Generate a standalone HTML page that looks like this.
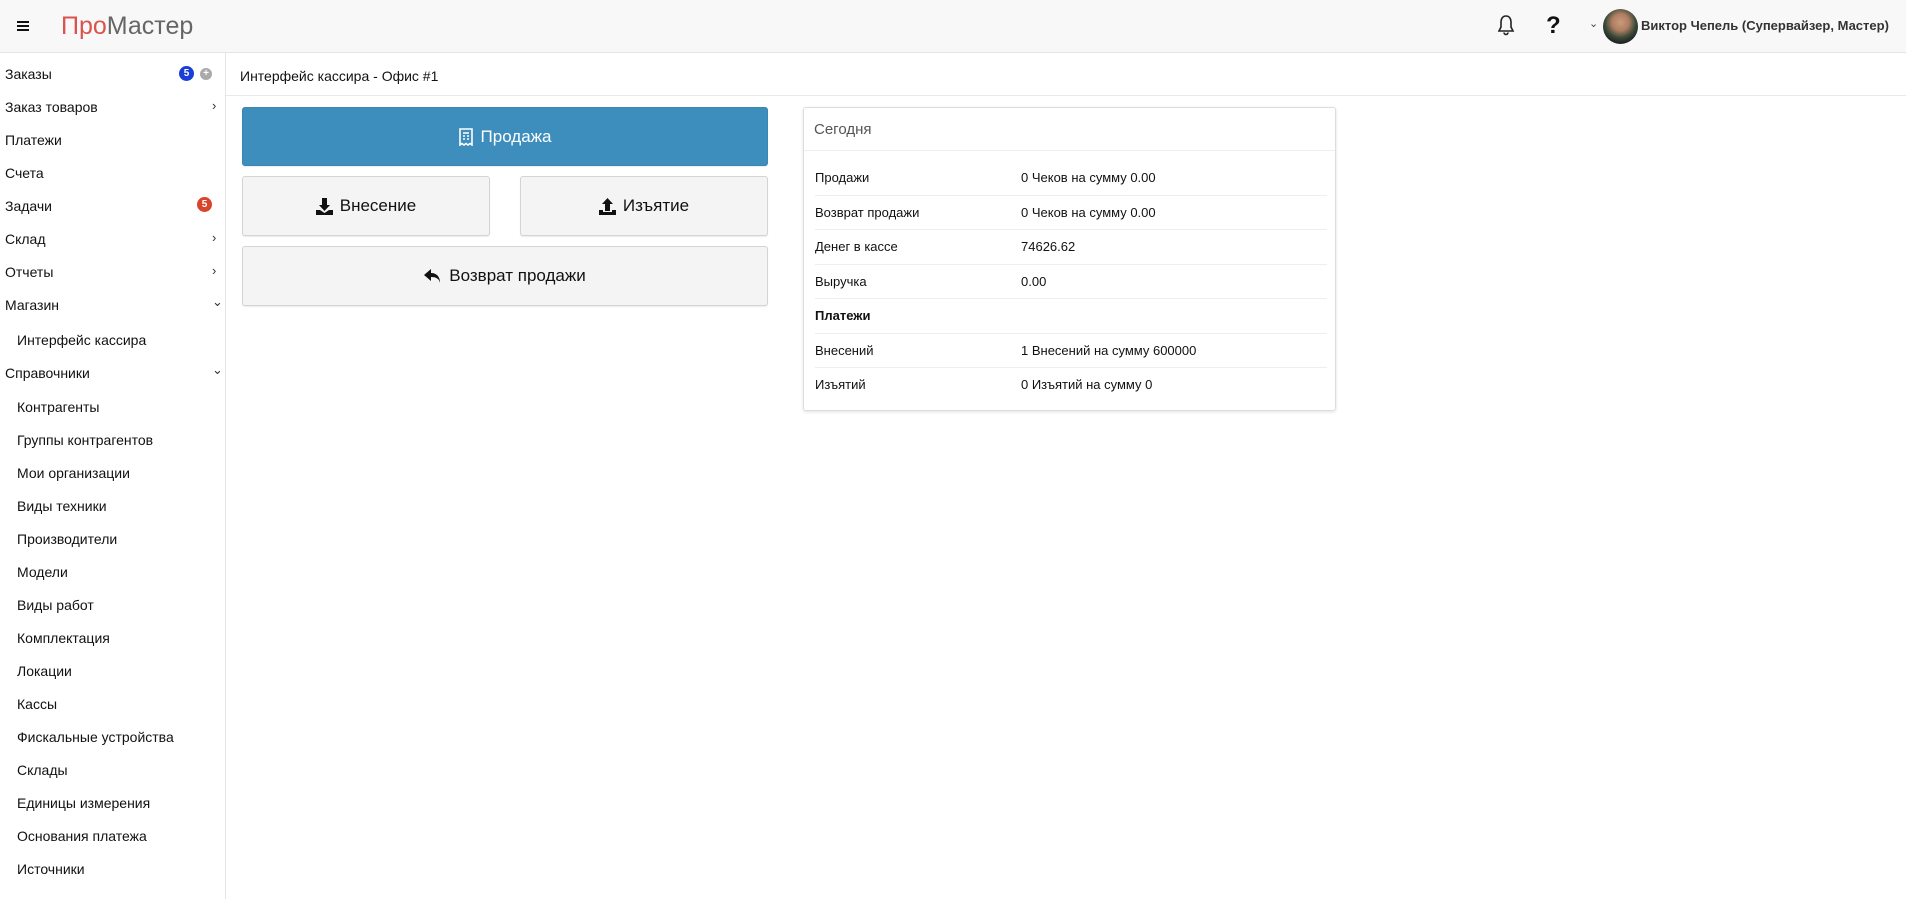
<!DOCTYPE html>
<html><head><meta charset="utf-8"><style>
*{box-sizing:border-box;margin:0;padding:0}
body{width:1906px;height:899px;overflow:hidden;font-family:"Liberation Sans",sans-serif;background:#fff;color:#111;position:relative}
.top{position:absolute;left:0;top:0;width:1906px;height:53px;background:#f8f8f8;border-bottom:1px solid #e5e5e5}
.abs{position:absolute}
.side{position:absolute;left:0;top:53px;width:226px;height:846px;border-right:1px solid #e5e5e5}
.it{position:absolute;left:5px;font-size:14px;line-height:18px;margin-top:1px}
.sub{left:17px}
.chev{position:absolute;left:212px;font-size:13px;color:#333;margin-top:1px}
.btn{position:absolute;border:1px solid #d4d4d4;background:#f4f4f4;border-radius:3px;display:flex;align-items:center;justify-content:center;font-size:17px;color:#111;box-shadow:0 1px 1px rgba(0,0,0,.08)}
.card{position:absolute;left:803px;top:107px;width:533px;height:304px;border:1px solid #ddd;border-radius:3px;box-shadow:0 1px 3px rgba(0,0,0,.12)}
.row{position:absolute;left:11px;width:512px;font-size:13px;height:34px;line-height:34px;border-top:1px solid #eee}
.row span{position:absolute;left:206px}
.badge{position:absolute;width:15px;height:15px;border-radius:50%;color:#fff;font-size:10px;font-weight:bold;text-align:center;line-height:15px;margin-top:1px}
</style></head><body>
<div class="top">
<svg class="abs" style="left:17px;top:21px" width="12" height="10" viewBox="0 0 12 10"><path d="M0 1h12M0 5h12M0 9h12" stroke="#111" stroke-width="2"/></svg>
<div class="abs" style="left:61px;top:12px;font-size:25px;color:#666"><span style="color:#d9534f">Про</span>Мастер</div>
<svg class="abs" style="left:1497px;top:14px" width="18" height="22" viewBox="0 0 18 22"><path d="M9 2C5.5 2 4 5 4 8v5l-2 4h14l-2-4V8c0-3-1.5-6-5-6zM7 18.5a2 2 0 0 0 4 0" fill="none" stroke="#222" stroke-width="1.6"/></svg>
<div class="abs" style="left:1546px;top:12px;font-size:24px;font-weight:bold">?</div>
<div class="abs" style="left:1589px;top:17px;font-size:11px;color:#444">&#8964;</div>
<div class="abs" style="left:1603px;top:9px;width:35px;height:35px;border-radius:50%;background:radial-gradient(circle at 50% 38%,#c99a7c 0,#b07e62 30%,#3a4a3a 55%,#1a1a1a 80%)"></div>
<div class="abs" style="left:1641px;top:18px;font-size:13px;font-weight:bold;color:#333">Виктор Чепель (Супервайзер, Мастер)</div>
</div>
<div class="side">
<div class="it" style="top:11px">Заказы</div>
<div class="badge" style="left:179px;top:12px;background:#1a3fd6">5</div>
<div class="badge" style="left:200px;top:14px;width:12px;height:12px;line-height:12px;background:#aaa">+</div>
<div class="it" style="top:44px">Заказ товаров</div><div class="chev" style="top:44px">&#8250;</div>
<div class="it" style="top:77px">Платежи</div>
<div class="it" style="top:110px">Счета</div>
<div class="it" style="top:143px">Задачи</div>
<div class="badge" style="left:197px;top:143px;background:#d9452b">5</div>
<div class="it" style="top:176px">Склад</div><div class="chev" style="top:176px">&#8250;</div>
<div class="it" style="top:209px">Отчеты</div><div class="chev" style="top:209px">&#8250;</div>
<div class="it" style="top:242px">Магазин</div><div class="chev" style="top:240px">&#8964;</div>
<div class="it sub" style="top:277px">Интерфейс кассира</div>
<div class="it" style="top:310px">Справочники</div><div class="chev" style="top:308px">&#8964;</div>
<div class="it sub" style="top:344px">Контрагенты</div>
<div class="it sub" style="top:377px">Группы контрагентов</div>
<div class="it sub" style="top:410px">Мои организации</div>
<div class="it sub" style="top:443px">Виды техники</div>
<div class="it sub" style="top:476px">Производители</div>
<div class="it sub" style="top:509px">Модели</div>
<div class="it sub" style="top:542px">Виды работ</div>
<div class="it sub" style="top:575px">Комплектация</div>
<div class="it sub" style="top:608px">Локации</div>
<div class="it sub" style="top:641px">Кассы</div>
<div class="it sub" style="top:674px">Фискальные устройства</div>
<div class="it sub" style="top:707px">Склады</div>
<div class="it sub" style="top:740px">Единицы измерения</div>
<div class="it sub" style="top:773px">Основания платежа</div>
<div class="it sub" style="top:806px">Источники</div>
</div>
<div class="abs" style="left:226px;top:53px;width:1680px;height:43px;border-bottom:1px solid #e8e8e8"></div>
<div class="abs" style="left:240px;top:68px;font-size:14px">Интерфейс кассира - Офис #1</div>
<div class="btn" style="left:242px;top:107px;width:526px;height:59px;background:#3d8ebd;border-color:#3a86b3;color:#fff">
<svg width="14" height="18" viewBox="0 0 14 18" style="margin-right:8px"><path d="M1 1h12v16l-2-1.5-2 1.5-2-1.5-2 1.5-2-1.5-2 1.5zM4 5h6M4 8h2M8 8h2M4 11h2M8 11h2" fill="none" stroke="#fff" stroke-width="1.6"/></svg>Продажа</div>
<div class="btn" style="left:242px;top:176px;width:248px;height:60px">
<svg width="17" height="17" viewBox="0 0 17 17" style="margin-right:7px"><path d="M6 0h5v7h3l-5.5 6L3 7h3zM0 12h4l4.5 3 4.5-3h4v5H0z" fill="#111"/></svg>Внесение</div>
<div class="btn" style="left:520px;top:176px;width:248px;height:60px">
<svg width="17" height="17" viewBox="0 0 17 17" style="margin-right:7px"><path d="M6 13h5V6h3L8.5 0 3 6h3zM0 12h4v2h9v-2h4v5H0z" fill="#111"/></svg>Изъятие</div>
<div class="btn" style="left:242px;top:246px;width:526px;height:60px">
<svg width="18" height="18" viewBox="0 0 18 18" style="margin-right:7px"><path d="M7 2L0 8l7 6v-4c5 0 8 1.5 9 6 0-6-3-10-9-10z" fill="#111"/></svg>Возврат продажи</div>
<div class="card">
<div class="abs" style="left:10px;top:13px;font-size:15px;color:#555">Сегодня</div>
<div class="abs" style="left:0;top:42px;width:531px;border-top:1px solid #eee"></div>
<div class="row" style="top:53px;border-top:none">Продажи<span>0 Чеков на сумму 0.00</span></div>
<div class="row" style="top:87px">Возврат продажи<span>0 Чеков на сумму 0.00</span></div>
<div class="row" style="top:121px">Денег в кассе<span>74626.62</span></div>
<div class="row" style="top:156px">Выручка<span>0.00</span></div>
<div class="row" style="top:190px;font-weight:bold">Платежи</div>
<div class="row" style="top:225px">Внесений<span>1 Внесений на сумму 600000</span></div>
<div class="row" style="top:259px">Изъятий<span>0 Изъятий на сумму 0</span></div>
</div>
</body></html>
